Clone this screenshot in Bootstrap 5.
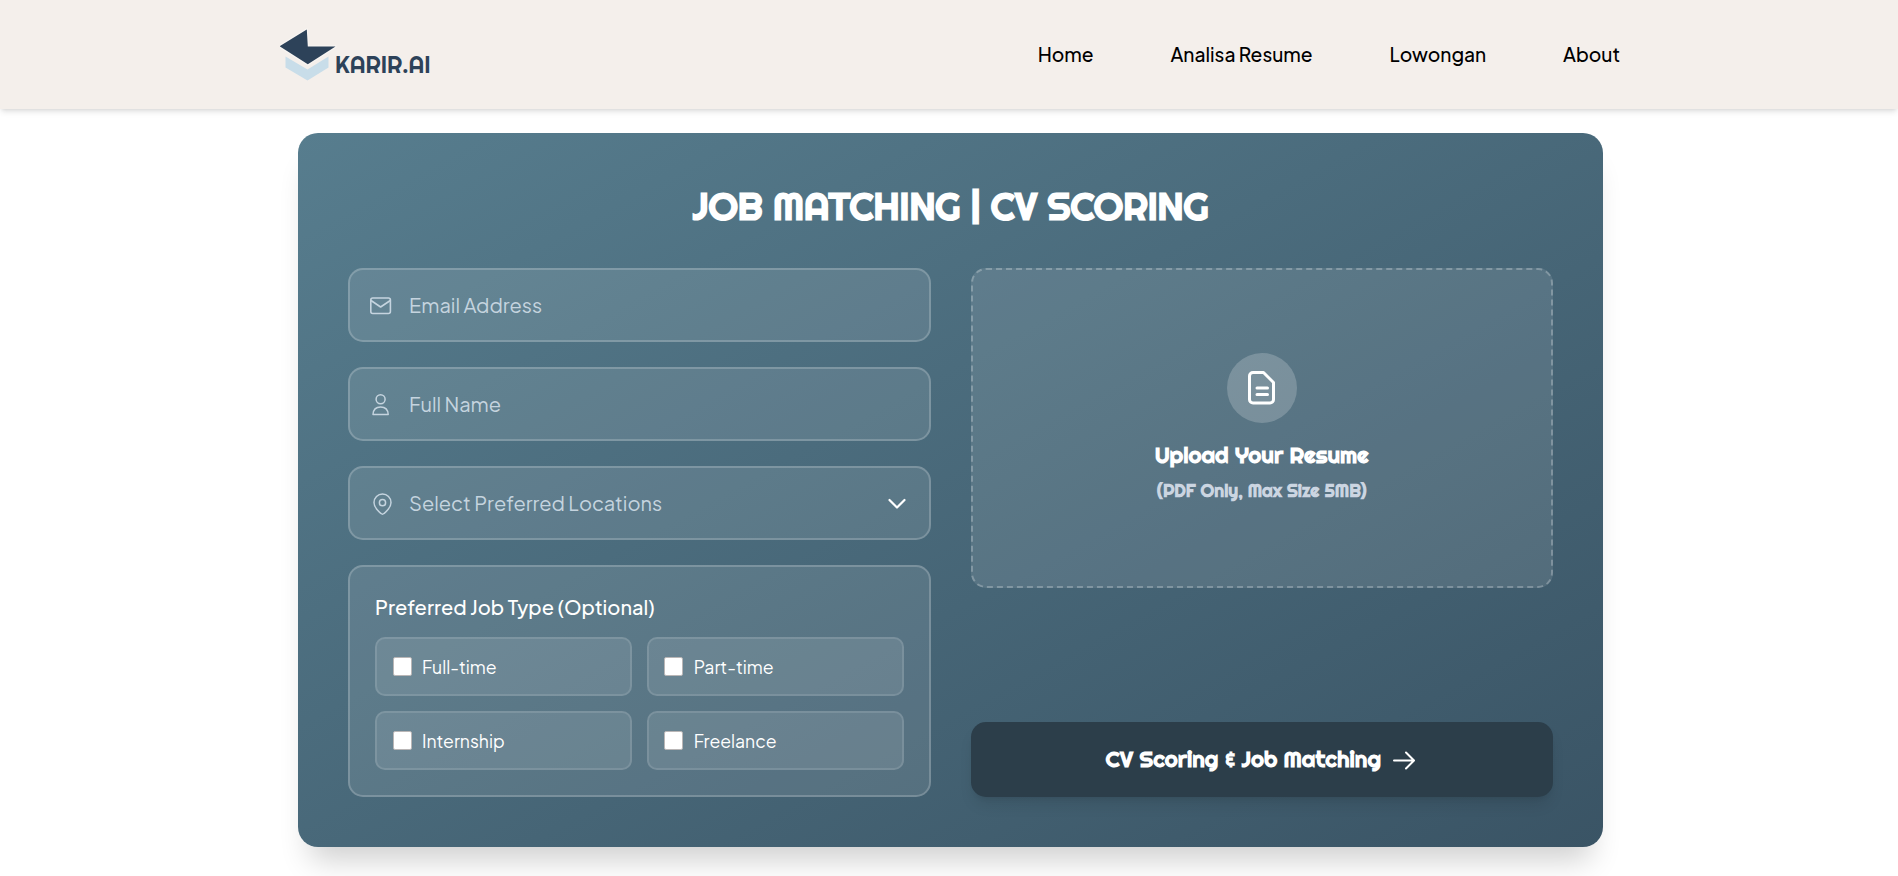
<!DOCTYPE html>
<html lang="id">
<head>
<meta charset="utf-8">
<meta name="viewport" content="width=device-width, initial-scale=1">
<title>KARIR.AI</title>
<link href="https://cdn.jsdelivr.net/npm/bootstrap@5.3.0/dist/css/bootstrap.min.css" rel="stylesheet">
<style>
body{background:#fff;font-family:"Plus Jakarta Sans","Inter",sans-serif;font-size:20px;line-height:30px;overflow:hidden;height:100vh}
svg{display:block;flex:none}
.site-header{background:#f4efeb;height:109px;box-shadow:0 4px 6px -1px rgba(0,0,0,.1),0 2px 4px -2px rgba(0,0,0,.1);position:relative;padding-left:2px}
.site-inner{width:1340px}
.menu{gap:76.8px;padding-bottom:1px}
.menu .nav-link{color:#000;padding:0;white-space:nowrap;font-size:19.2px;font-weight:500}
.stage{padding-left:3px}
.panel{width:1305px;height:714px;margin-top:24px;padding:49px 50px 50px;border-radius:20px;background:linear-gradient(to bottom right,#577d8e 0%,#3a5465 100%);box-shadow:0 25px 30px -12px rgba(0,0,0,.19)}
.display-face{font-family:"Righteous","Lato",sans-serif;font-weight:700;color:#fff;white-space:nowrap;margin:0}
.panel-title{font-size:38.4px;line-height:48px;margin-bottom:38px;letter-spacing:-.5px}
.cols{display:grid;grid-template-columns:1fr 1fr;gap:40px;height:529px}
.glass{background:rgba(255,255,255,.1);border:2px solid rgba(255,255,255,.2);border-radius:15px}
.field{height:74px;padding:0 22px 0 18px;color:#c5d4df}
.field svg:first-child{margin-right:17px}
.field input{all:unset;flex:1;height:30px;line-height:30px}
.field input::placeholder{color:#c5d4df;opacity:1}
.types{height:232px;padding:25px}
.types-label{color:#fff;font-weight:500;margin-bottom:15px}
.types-grid{display:grid;grid-template-columns:1fr 1fr;gap:15px}
.type-item{height:59px;border-radius:10px;padding:0 15.5px;border-color:rgba(255,255,255,.12);color:#fff;font-size:17.6px}
.tick{width:19px;height:19px;background:#fff;border:1px solid #b9b6b6;border-radius:2px;appearance:none;margin:0 10.5px 0 0}
.dropbox{height:320px;border-style:dashed;border-color:rgba(255,255,255,.25);padding-top:83px}
.disc{width:70px;height:70px;background:rgba(255,255,255,.2);margin-bottom:15px}
.drop-title{font-size:22.4px;line-height:34px;margin-bottom:5px}
.drop-note{font-size:17.6px;line-height:28px;color:#cbd5e1}
.go,.go:hover{height:75px;background:#2c3e4a;border:0;border-radius:15px;font-size:22.4px;box-shadow:0 10px 15px -3px rgba(0,0,0,.1),0 4px 6px -4px rgba(0,0,0,.1)}
</style>
</head>
<body>
<header class="site-header d-flex justify-content-center">
  <div class="site-inner d-flex justify-content-between align-items-center">
    <a href="#" aria-label="KARIR.AI">
      <svg width="152" height="54" viewBox="280.500 27.500 152 54">
        <path d="M286 56 308 69 329 56V67L308 80 286 67Z" fill="#c8dde9"/>
        <path d="M280 45.700 307.300 29 308.300 46 336 45.900 308.300 63.700Z" fill="#2d4259" stroke="#f8f5f2" stroke-width="2.500" stroke-linejoin="round" paint-order="stroke"/>
        <text x="335.500" y="72.300" font-family="Righteous,Lato,sans-serif" font-size="24" textLength="95.500" lengthAdjust="spacingAndGlyphs" fill="#2d4259">KARIR.AI</text>
      </svg>
    </a>
    <nav class="nav menu">
      <a class="nav-link" href="#">Home</a>
      <a class="nav-link" href="#">Analisa Resume</a>
      <a class="nav-link" href="#">Lowongan</a>
      <a class="nav-link" href="#">About</a>
    </nav>
  </div>
</header>
<main class="stage">
  <section class="panel mx-auto">
    <h1 class="display-face panel-title text-center">JOB MATCHING | CV SCORING</h1>
    <form class="cols">
      <div class="d-flex flex-column justify-content-between">
        <label class="glass field d-flex align-items-center">
          <svg width="24" height="24" viewBox="0 0 24 24" fill="none" stroke="currentColor" stroke-width="1.600" stroke-linejoin="round"><rect x="2.800" y="5" width="19.600" height="15.500" rx="2"/><path d="M3 7.500 12.600 14 22.300 7.500"/></svg>
          <input type="text" placeholder="Email Address">
        </label>
        <label class="glass field d-flex align-items-center">
          <svg width="24" height="24" viewBox="0 0 24 24" fill="none" stroke="currentColor" stroke-width="1.500" stroke-linejoin="round"><circle cx="12.600" cy="7.300" r="4.500"/><path d="M5 22.500C5.200 17.800 8.100 14.900 12.600 14.900S20 17.800 20.200 22.500Z"/></svg>
          <input type="text" placeholder="Full Name">
        </label>
        <div class="glass field d-flex align-items-center">
          <svg width="24" height="24" viewBox="0 0 24 24" fill="none" stroke="currentColor" stroke-width="1.500" stroke-linejoin="round"><path d="M14.500 23.200C13.500 23.200 6 17.500 6 11.500a8.500 8.500 0 0 1 17 0C23 17.500 15.500 23.200 14.500 23.200Z"/><circle cx="14.500" cy="11.700" r="3.100"/></svg>
          <span class="flex-grow-1">Select Preferred Locations</span>
          <svg width="20" height="12" viewBox="0 -1 20 12" fill="none" stroke="#fff" stroke-width="2.200" stroke-linecap="round" stroke-linejoin="round"><path d="M2.500 2 10 9.500 17.500 2"/></svg>
        </div>
        <div class="glass types">
          <div class="types-label">Preferred Job Type (Optional)</div>
          <div class="types-grid">
            <label class="glass type-item d-flex align-items-center"><input type="checkbox" class="tick">Full-time</label>
            <label class="glass type-item d-flex align-items-center"><input type="checkbox" class="tick">Part-time</label>
            <label class="glass type-item d-flex align-items-center"><input type="checkbox" class="tick">Internship</label>
            <label class="glass type-item d-flex align-items-center"><input type="checkbox" class="tick">Freelance</label>
          </div>
        </div>
      </div>
      <div class="d-flex flex-column justify-content-between">
        <div class="glass dropbox d-flex flex-column align-items-center">
          <div class="disc rounded-circle d-flex align-items-center justify-content-center">
            <svg width="30" height="36" viewBox="0 0 30 36" fill="none" stroke="#fff" stroke-width="3" stroke-linecap="round" stroke-linejoin="round"><path d="M6 2.500H16.500L26.500 12.500V29.500A3.500 3.500 0 0 1 23 33H6A3.500 3.500 0 0 1 2.500 29.500V6A3.500 3.500 0 0 1 6 2.500ZM10 18H20.500M10 24.500H20.500"/></svg>
          </div>
          <h2 class="display-face drop-title">Upload Your Resume</h2>
          <p class="display-face drop-note">(PDF Only, Max Size 5MB)</p>
        </div>
        <button type="button" class="btn go display-face d-flex align-items-center justify-content-center">
          CV Scoring &amp; Job Matching
          <svg class="ms-2" width="29" height="24" viewBox="-1 0 29 24" fill="none" stroke="#fff" stroke-width="2" stroke-linecap="round" stroke-linejoin="round"><path d="M4 12.500H23.500M16 4.500 24 12.500 16 20.500"/></svg>
        </button>
      </div>
    </form>
  </section>
</main>
</body>
</html>
